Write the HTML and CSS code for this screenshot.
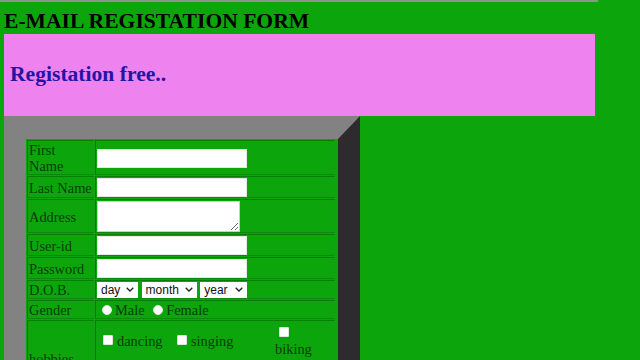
FILE: index.html
```html
<!DOCTYPE html>
<html>
<head>
<meta charset="utf-8">
<title>E-MAIL REGISTATION FORM</title>
<link rel="stylesheet" href="styles.css">
</head>
<body>
<div class="topbar"></div>
<h1 class="title">E-MAIL REGISTATION FORM</h1>
<div class="banner"><h2 class="banner-text">Registation free..</h2></div>
<form class="form">
<table class="reg">
  <tr>
    <td class="lbl">First<br>Name</td>
    <td class="val"><input class="txt" type="text"></td>
  </tr>
  <tr>
    <td class="lbl">Last Name</td>
    <td class="val"><input class="txt" type="text"></td>
  </tr>
  <tr>
    <td class="lbl">Address</td>
    <td class="val"><textarea class="area"></textarea></td>
  </tr>
  <tr>
    <td class="lbl">User-id</td>
    <td class="val"><input class="txt" type="text"></td>
  </tr>
  <tr>
    <td class="lbl">Password</td>
    <td class="val"><input class="txt" type="password"></td>
  </tr>
  <tr>
    <td class="lbl">D.O.B.</td>
    <td class="val dob"><span class="sel sel-day"><select class="pick"><option>day</option></select><svg class="chev" width="8" height="5" viewBox="0 0 8 5"><path d="M0.7 0.7 L4 4 L7.3 0.7" fill="none" stroke="#222" stroke-width="1.3"/></svg></span> <span class="sel sel-month"><select class="pick"><option>month</option></select><svg class="chev" width="8" height="5" viewBox="0 0 8 5"><path d="M0.7 0.7 L4 4 L7.3 0.7" fill="none" stroke="#222" stroke-width="1.3"/></svg></span> <span class="sel sel-year"><select class="pick"><option>year</option></select><svg class="chev" width="8" height="5" viewBox="0 0 8 5"><path d="M0.7 0.7 L4 4 L7.3 0.7" fill="none" stroke="#222" stroke-width="1.3"/></svg></span></td>
  </tr>
  <tr>
    <td class="lbl">Gender</td>
    <td class="val"><input class="rad" type="radio" name="g">Male <input class="rad" type="radio" name="g">Female</td>
  </tr>
  <tr class="row-hob">
    <td class="lbl">hobbies</td>
    <td class="val hob-val">
      <table class="hob">
        <tr>
          <td class="hc1"><input class="chk" type="checkbox">dancing</td>
          <td class="hc2"><input class="chk" type="checkbox">singing</td>
          <td class="hc3"><input class="chk" type="checkbox"> biking</td>
        </tr>
      </table>
    </td>
  </tr>
</table>
</form>
</body>
</html>
```
FILE: styles.css
```css
html, body {
  margin: 0;
  padding: 0;
}
body {
  background: #0ca60c;
  font-family: "Liberation Serif", "Times New Roman", serif;
  font-size: 14.4px;
  width: 640px;
  height: 360px;
  overflow: hidden;
}
.topbar {
  width: 598px;
  height: 2px;
  background: #8c968c;
}
.title {
  margin: 7px 0 1px 4px;
  font-size: 21.6px;
  line-height: 24px;
  font-weight: bold;
  color: #000;
  white-space: nowrap;
}
.banner {
  margin-left: 4px;
  width: 579px;
  padding: 28px 6px 30px 6px;
  background: #ee82ee;
}
.banner-text {
  margin: 0;
  font-size: 21.6px;
  line-height: 24px;
  font-weight: bold;
  color: #2414a6;
}
.form {
  margin: 0;
}
.reg {
  margin-left: 4px;
  border-collapse: separate;
  border-spacing: 1px;
  border-style: solid;
  border-width: 23px 22px 22px 22px;
  border-color: #828282 #2e2b2e #2e2b2e #828282;
  padding: 0 2px 0 0;
  table-layout: fixed;
  width: 356px;
  box-sizing: border-box;
  color: #073c07;
}
.reg > tbody > tr > td {
  border: 1px solid #087c08;
  border-right-color: #15a015;
  border-bottom-color: #0a8a0a;
  padding: 1px 1px 0 1px;
  line-height: 16px;
  vertical-align: middle;
}
.lbl {
  width: 63px;
  white-space: nowrap;
}
.val {
  width: 236px;
}
.txt {
  display: block;
  box-sizing: border-box;
  width: 150px;
  height: 19px;
  margin: 0;
  border: 1px solid #e4e8e4;
  background: #fff;
  padding: 0 2px;
}
.area {
  display: block;
  box-sizing: border-box;
  width: 143px;
  height: 31px;
  margin: 0;
  border: 1px solid #c8cfc8;
  background: #fff;
  padding: 0;
  resize: both;
}
.dob {
  white-space: nowrap;
}
.sel {
  position: relative;
  display: inline-block;
  vertical-align: top;
  height: 16px;
}
.pick {
  appearance: none;
  -webkit-appearance: none;
  box-sizing: border-box;
  height: 16px;
  margin: 0;
  border: none;
  border-radius: 0;
  background: #fff;
  color: #111;
  font-family: "Liberation Sans", Arial, sans-serif;
  font-size: 12px;
  line-height: 14px;
  padding: 0 0 0 4px;
  display: block;
}
.sel-day .pick { width: 41px; }
.sel-month .pick { width: 55px; }
.sel-year .pick { width: 47px; }
.chev {
  position: absolute;
  top: 5px;
  right: 4px;
}
.rad {
  appearance: none;
  -webkit-appearance: none;
  box-sizing: border-box;
  width: 10px;
  height: 10px;
  margin: 3px 3px 0 5px;
  border: 1px solid #dfe6df;
  border-radius: 50%;
  background: #fff;
  vertical-align: baseline;
}
.row-hob {
  height: 76px;
}
.reg > tbody > tr > td.hob-val {
  vertical-align: top;
}
.hob {
  border-collapse: separate;
  border-spacing: 2px;
  table-layout: fixed;
  width: 230px;
  margin-left: 0;
}
.hob td {
  padding: 0;
  line-height: 16px;
  vertical-align: middle;
}
.hc1 { width: 72px; }
.hc2 { width: 100px; }
.hc3 { width: 50px; }
.chk {
  appearance: none;
  -webkit-appearance: none;
  box-sizing: border-box;
  width: 10px;
  height: 10px;
  margin: 3px 4px 1px 4px;
  border: 1px solid #dfe6df;
  border-radius: 1px;
  background: #fff;
  vertical-align: baseline;
}
```
